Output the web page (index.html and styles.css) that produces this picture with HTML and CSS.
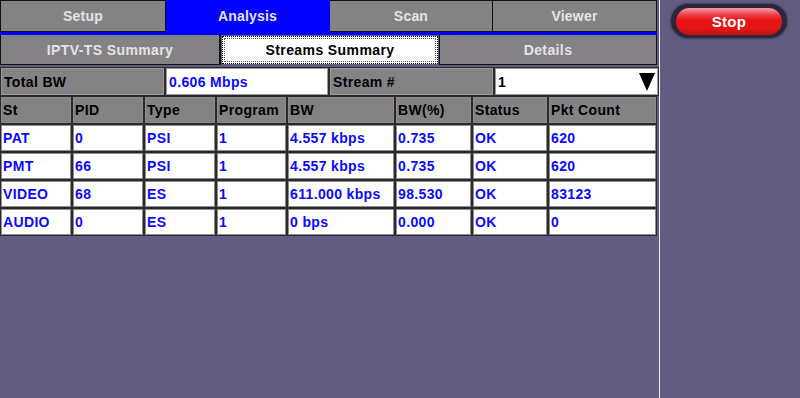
FILE: index.html
```html
<!DOCTYPE html>
<html>
<head>
<meta charset="utf-8">
<link rel="stylesheet" href="styles.css">
</head>
<body>
<div class="screen">
  <div class="left">
    <div class="main-tabs">
      <div class="tab">Setup</div>
      <div class="tab active">Analysis</div>
      <div class="tab">Scan</div>
      <div class="tab">Viewer</div>
    </div>
    <div class="sub-tabs">
      <div class="subtab">IPTV-TS Summary</div>
      <div class="subtab active">Streams Summary</div>
      <div class="subtab">Details</div>
    </div>
    <div class="info-row">
      <div class="cell label">Total BW</div>
      <div class="cell value">0.606 Mbps</div>
      <div class="cell label">Stream #</div>
      <div class="cell select"><span>1</span><span class="arrow"></span></div>
    </div>
    <div class="grid">
      <div class="cell head">St</div>
      <div class="cell head">PID</div>
      <div class="cell head">Type</div>
      <div class="cell head">Program</div>
      <div class="cell head">BW</div>
      <div class="cell head">BW(%)</div>
      <div class="cell head">Status</div>
      <div class="cell head">Pkt Count</div>

      <div class="cell data">PAT</div>
      <div class="cell data">0</div>
      <div class="cell data">PSI</div>
      <div class="cell data">1</div>
      <div class="cell data">4.557 kbps</div>
      <div class="cell data">0.735</div>
      <div class="cell data">OK</div>
      <div class="cell data">620</div>

      <div class="cell data">PMT</div>
      <div class="cell data">66</div>
      <div class="cell data">PSI</div>
      <div class="cell data">1</div>
      <div class="cell data">4.557 kbps</div>
      <div class="cell data">0.735</div>
      <div class="cell data">OK</div>
      <div class="cell data">620</div>

      <div class="cell data">VIDEO</div>
      <div class="cell data">68</div>
      <div class="cell data">ES</div>
      <div class="cell data">1</div>
      <div class="cell data">611.000 kbps</div>
      <div class="cell data">98.530</div>
      <div class="cell data">OK</div>
      <div class="cell data">83123</div>

      <div class="cell data">AUDIO</div>
      <div class="cell data">0</div>
      <div class="cell data">ES</div>
      <div class="cell data">1</div>
      <div class="cell data">0 bps</div>
      <div class="cell data">0.000</div>
      <div class="cell data">OK</div>
      <div class="cell data">0</div>
    </div>
  </div>
  <div class="right">
    <div class="stop-ring"><div class="stop">Stop</div></div>
  </div>
</div>
</body>
</html>
```
FILE: styles.css
```css
html, body {
  margin: 0;
  padding: 0;
}
body {
  width: 800px;
  height: 398px;
  background: #625c82;
  font-family: "Liberation Sans", Arial, sans-serif;
  font-weight: bold;
  overflow: hidden;
}
.screen {
  display: flex;
  height: 398px;
}
.left {
  width: 657px;
  display: flex;
  flex-direction: column;
}
.right {
  width: 141px;
  margin-left: 2px;
  border-left: 1px solid #f4f4f8;
  display: flex;
  justify-content: center;
  padding-top: 4px;
  padding-right: 2px;
  box-sizing: border-box;
}
.main-tabs {
  display: grid;
  grid-template-columns: 166px 164px 163px 164px;
  height: 32px;
  border-bottom: 3px solid #0000ff;
}
.tab {
  background: #858285;
  color: #e4e4e4;
  font-size: 14px;
  letter-spacing: 0.2px;
  display: flex;
  align-items: center;
  justify-content: center;
  border: 1px solid #111;
  border-left: none;
  box-sizing: border-box;
  padding-bottom: 1px;
}
.tab:first-child {
  border-left: 1px solid #111;
}
.tab.active {
  background: #0000ff;
  border-color: #0000ff;
}
.sub-tabs {
  display: grid;
  grid-template-columns: 221px 218px 218px;
  height: 30px;
}
.subtab {
  background: #858285;
  color: #e4e4e4;
  font-size: 14px;
  letter-spacing: 0.4px;
  display: flex;
  align-items: center;
  justify-content: center;
  border: 1px solid #111;
  border-top: none;
  box-sizing: border-box;
}
.subtab:first-child {
  border-right: 2px solid #111;
}
.subtab.active {
  background: #ffffff;
  color: #000;
  border: 1px dotted #000;
  outline: 1px dotted #555;
  outline-offset: -3px;
  margin: 1px;
}
.info-row {
  display: grid;
  grid-template-columns: 163px 162px 163px 163px;
  column-gap: 2px;
  height: 27px;
  margin-top: 3px;
  padding-left: 1px;
}
.cell {
  box-sizing: border-box;
  font-size: 14px;
  letter-spacing: 0.35px;
  display: flex;
  align-items: center;
  padding-left: 2px;
  white-space: nowrap;
}
.info-row .cell {
  border: 1px solid #9a9a9a;
  outline: 1px solid #2a2a2a;
}
.label {
  background: #858285;
  color: #000;
}
.value {
  background: #fff;
  color: #0a0aff;
}
.select {
  background: #fff;
  color: #000;
  justify-content: space-between;
  padding-right: 2px;
}
.arrow {
  width: 0;
  height: 0;
  border-left: 8px solid transparent;
  border-right: 8px solid transparent;
  border-top: 18px solid #000;
}
.grid {
  display: grid;
  grid-template-columns: 72px 72px 72px 71px 108px 77px 76px 109px;
  grid-auto-rows: 28px;
  background: #2a2a2a;
  margin-top: 1px;
  width: 657px;
}
.grid .cell {
  border: 1px solid #2a2a2a;
  box-shadow: inset 0 0 0 1px #8c8c8c;
}
.head {
  background: #858285;
  color: #000;
}
.data {
  background: #fff;
  color: #0a0aff;
}
.stop-ring {
  width: 116px;
  height: 34px;
  border-radius: 17px;
  background: #2b283c;
  box-shadow: 0 0 2px 1px #46415e;
  display: flex;
  align-items: center;
  justify-content: center;
}
.stop {
  width: 106px;
  height: 27px;
  border-radius: 14px;
  background: linear-gradient(#f4a0b0 0%, #ec4048 25%, #e81414 45%, #e41616 75%, #c41010 100%);
  color: #fff;
  font-size: 15px;
  letter-spacing: 0.3px;
  display: flex;
  align-items: center;
  justify-content: center;
}
```
